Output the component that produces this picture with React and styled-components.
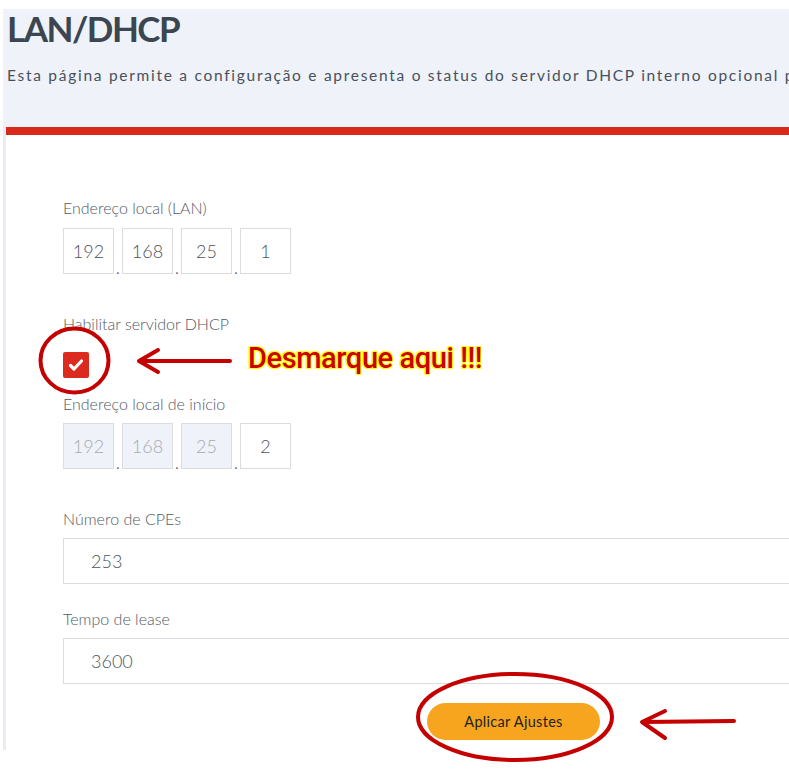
import React from "react";
import styled, { createGlobalStyle } from "styled-components";

const GlobalStyle = createGlobalStyle`
  html, body {
    margin: 0;
    padding: 0;
    background: #ffffff;
  }
  * {
    box-sizing: border-box;
  }
`;

export default function App() {
  return (
    <>
      <GlobalStyle />
      <Page>
        <Shell>
          <Header>
            <Title>LAN/DHCP</Title>
            <Subtitle>
              Esta página permite a configuração e apresenta o status do
              servidor DHCP interno opcional para a rede local
            </Subtitle>
          </Header>
          <Card>
            <Label>Endereço local (LAN)</Label>
            <IpRow>
              <IpBox value="192" />
              <Dot>.</Dot>
              <IpBox value="168" />
              <Dot>.</Dot>
              <IpBox value="25" />
              <Dot>.</Dot>
              <IpBox value="1" />
            </IpRow>

            <Label $top={40}>Habilitar servidor DHCP</Label>
            <Checkbox>
              <svg width="16" height="14" viewBox="0 0 16 14">
                <path
                  d="M2.5 7.5 L6 11 L13.5 3"
                  fill="none"
                  stroke="#fff"
                  strokeWidth="3.2"
                  strokeLinecap="round"
                  strokeLinejoin="round"
                />
              </svg>
            </Checkbox>

            <Label $top={16}>Endereço local de início</Label>
            <IpRow $gap={9}>
              <IpBox value="192" disabled />
              <Dot>.</Dot>
              <IpBox value="168" disabled />
              <Dot>.</Dot>
              <IpBox value="25" disabled />
              <Dot>.</Dot>
              <IpBox value="2" />
            </IpRow>

            <Label $top={40}>Número de CPEs</Label>
            <WideInput>253</WideInput>

            <Label $top={25}>Tempo de lease</Label>
            <WideInput>3600</WideInput>

            <ButtonRow>
              <ApplyButton>Aplicar Ajustes</ApplyButton>
            </ButtonRow>
          </Card>
        </Shell>

        <Marks width="789" height="771" viewBox="0 0 789 771">
          <ellipse cx="74.5" cy="360.5" rx="34" ry="32" />
          <path d="M230 361 L140 361 M158 350 L139 361 L158 372" />
          <ellipse cx="515" cy="717" rx="97" ry="43" />
          <path d="M734 721 L643 722 M665 711 L642 722 L665 738" />
        </Marks>
        <Callout>Desmarque aqui !!!</Callout>
      </Page>
    </>
  );
}

function IpBox({ value, disabled }) {
  return <Octet $disabled={disabled}>{value}</Octet>;
}

const Page = styled.div`
  position: relative;
  width: 789px;
  height: 771px;
  overflow: hidden;
  padding: 9px 0 0 3px;
  font-family: Lato, "Open Sans", sans-serif;
`;

const Shell = styled.div`
  width: 900px;
  height: 741px;
  background: #e9ecf3;
  padding-left: 3px;
`;

const Header = styled.div`
  height: 118px;
  background: #eff2f9;
  margin-left: -3px;
  padding: 0 0 0 4px;
`;

const Title = styled.h1`
  margin: 0;
  font-size: 35px;
  line-height: 38px;
  font-weight: 700;
  letter-spacing: -1.5px;
  color: #3b4650;
`;

const Subtitle = styled.p`
  margin: 18px 0 0;
  font-size: 15.5px;
  line-height: 20px;
  letter-spacing: 1.72px;
  color: #48515a;
  white-space: nowrap;
`;

const Card = styled.div`
  height: 623px;
  background: #ffffff;
  border-top: 8px solid #d9291c;
  padding: 63px 0 0 57px;
`;

const Label = styled.div`
  margin-top: ${(p) => p.$top || 0}px;
  font-size: 16px;
  line-height: 20px;
  font-weight: 300;
  color: #535a63;
`;

const IpRow = styled.div`
  display: flex;
  align-items: flex-end;
  margin-top: ${(p) => p.$gap || 10}px;
`;

const Octet = styled.div`
  width: 51px;
  height: 46px;
  border: 1px solid #dcdcdc;
  background: ${(p) => (p.$disabled ? "#eff2f9" : "#ffffff")};
  color: ${(p) => (p.$disabled ? "#a7abb0" : "#4c535a")};
  font-size: 18px;
  font-weight: 300;
  display: flex;
  align-items: center;
  justify-content: center;
`;

const Dot = styled.span`
  width: 8px;
  text-align: center;
  font-size: 14px;
  line-height: 10px;
  color: #666;
`;

const Checkbox = styled.div`
  width: 26px;
  height: 26px;
  margin-top: 18px;
  background: #dc2a1f;
  border-radius: 2px;
  display: flex;
  align-items: center;
  justify-content: center;
`;

const WideInput = styled.div`
  width: 780px;
  height: 46px;
  margin-top: 9px;
  border: 1px solid #dcdcdc;
  padding-left: 27px;
  display: flex;
  align-items: center;
  font-size: 18px;
  font-weight: 300;
  color: #4c535a;
`;

const ButtonRow = styled.div`
  display: flex;
  padding: 19px 0 0 364px;
`;

const ApplyButton = styled.button`
  width: 173px;
  height: 37px;
  border: none;
  border-radius: 19px;
  background: #f7a51f;
  color: #222;
  font-family: Lato, sans-serif;
  font-size: 14.5px;
  font-weight: 400;
  letter-spacing: 0.3px;
`;

const Marks = styled.svg`
  position: absolute;
  left: 0;
  top: 0;
  pointer-events: none;
  fill: none;
  stroke: #c40000;
  stroke-width: 4;
  stroke-linecap: round;
  stroke-linejoin: round;
`;

const Callout = styled.div`
  position: absolute;
  left: 248px;
  top: 341px;
  font-family: Roboto, "Noto Sans", sans-serif;
  font-size: 29px;
  font-weight: 500;
  letter-spacing: -0.4px;
  color: #cc0000;
  text-shadow: 1px 1px 0 #ffff00, -1px -1px 0 #ffff00, 1px -1px 0 #ffff00,
    -1px 1px 0 #ffff00, 0 1px 0 #ffff00, 1px 0 0 #ffff00, 0 -1px 0 #ffff00,
    -1px 0 0 #ffff00;
`;
